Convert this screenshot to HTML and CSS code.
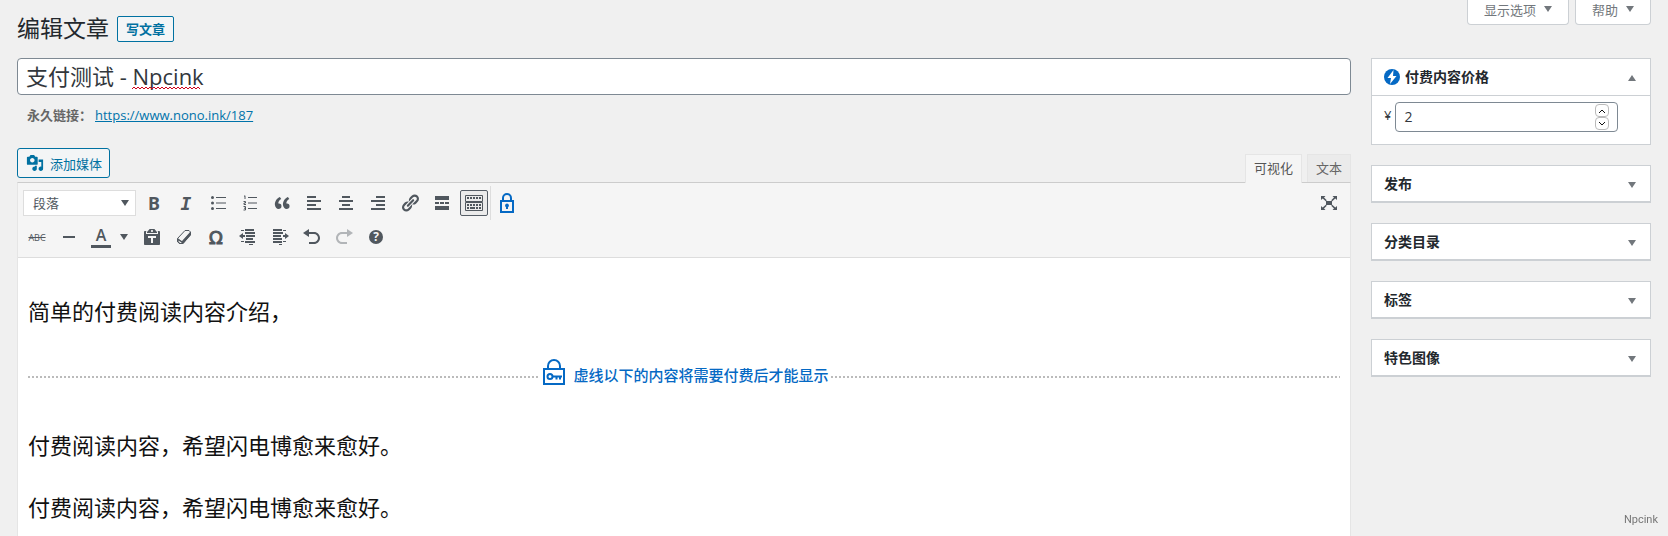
FILE: index.html
```html
<!DOCTYPE html>
<html lang="zh-CN">
<head>
    <meta charset="UTF-8">
    <meta name="viewport" content="width=device-width, initial-scale=1.0">
    <title>编辑文章</title>
    <link rel="stylesheet" href="styles.css">
</head>
<body>
    <header class="page-header">
        <h1>编辑文章</h1>
        <a href="#" class="title-action">写文章</a>
        <div class="screen-meta">
            <button type="button" class="meta-tab">显示选项<span class="arrow"></span></button>
            <button type="button" class="meta-tab">帮助<span class="arrow"></span></button>
        </div>
    </header>

    <div class="columns">
        <main class="main">
            <div class="title-wrap">
                <input type="text" class="title-input" id="title" aria-label="标题" value="支付测试 - Npcink">
                <svg class="squiggle" viewBox="0 0 68 4" aria-hidden="true"><path d="M0 3l2-2 2 2 2-2 2 2 2-2 2 2 2-2 2 2 2-2 2 2 2-2 2 2 2-2 2 2 2-2 2 2 2-2 2 2 2-2 2 2 2-2 2 2 2-2 2 2 2-2 2 2 2-2 2 2 2-2 2 2 2-2 2 2 2-2 2 2"/></svg>
            </div>
            <div class="permalink">
                <strong>永久链接：</strong>
                <a href="#">https://www.nono.ink/187</a>
            </div>

            <div class="editor-tools">
                <button type="button" class="media-btn">
                    <svg viewBox="0 0 20 20"><path d="M13 11V4c0-.55-.45-1-1-1h-1.67L9 1H5L3.67 3H2c-.55 0-1 .45-1 1v7c0 .55.45 1 1 1h10c.55 0 1-.45 1-1zM7 4.5c1.38 0 2.5 1.12 2.5 2.5S8.38 9.5 7 9.5 4.5 8.38 4.5 7 5.62 4.5 7 4.5zM14 6h5v10.5c0 1.38-1.12 2.5-2.5 2.5S14 17.88 14 16.5s1.12-2.5 2.5-2.5c.17 0 .34.02.5.05V9h-3V6zm-4 8.05V13h2v3.5c0 1.38-1.12 2.5-2.5 2.5S7 17.88 7 16.5 8.12 14 9.5 14c.17 0 .34.02.5.05z"/></svg>
                    添加媒体
                </button>
                <div class="editor-tabs">
                    <button type="button" class="editor-tab active">可视化</button>
                    <button type="button" class="editor-tab">文本</button>
                </div>
            </div>

            <div class="editor">
                <div class="toolbar">
                    <div class="toolbar-row">
                        <div class="select-wrap">
                            <select class="format-select" aria-label="格式">
                                <option>段落</option>
                            </select>
                            <span class="arrow"></span>
                        </div>
                        <button type="button" class="tool tool-bold" title="粗体">B</button>
                        <button type="button" class="tool tool-italic" title="斜体">I</button>
                        <button type="button" class="tool" title="项目符号列表">
                            <svg viewBox="0 0 20 20"><circle cx="4.5" cy="4.5" r="1.5"/><circle cx="4.5" cy="10" r="1.5"/><circle cx="4.5" cy="15.5" r="1.5"/><path d="M8 4h10v1H8zM8 9.500h10v1H8zM8 15h10v1H8z"/></svg>
                        </button>
                        <button type="button" class="tool" title="编号列表">
                            <svg viewBox="0 0 20 20"><path d="M8 4h9v1H8zM8 9.500h9v1H8zM8 15h9v1H8z"/><path class="line" d="M4 3.500l1-.8v3.300M3.500 8.500h2v1.500h-1.500v1.500h2M3.500 13.500h2v3.500h-2M4 15.200h1.500"/></svg>
                        </button>
                        <button type="button" class="tool" title="段落引用">
                            <svg viewBox="0 0 20 20"><path d="M9.490 13.220c0-.74-.2-1.380-.61-1.900-.62-.78-1.830-.88-2.530-.72-.29-1.650 1.110-3.750 2.920-4.650L7.880 4c-2.730 1.300-5.420 4.280-4.960 8.050C3.210 14.430 4.590 16 6.540 16c.85 0 1.560-.25 2.120-.75s.83-1.180.83-2.030zm8.050 0c0-.74-.2-1.380-.61-1.900-.63-.78-1.830-.88-2.530-.72-.29-1.650 1.110-3.750 2.920-4.650L15.930 4c-2.730 1.300-5.410 4.280-4.950 8.050.29 2.380 1.660 3.950 3.610 3.950.85 0 1.560-.25 2.120-.75s.83-1.180.83-2.030z"/></svg>
                        </button>
                        <button type="button" class="tool" title="左对齐">
                            <svg viewBox="0 0 20 20"><path d="M3 3h9v2H3zM3 7h14v2H3zM3 11h9v2H3zM3 15h14v2H3z"/></svg>
                        </button>
                        <button type="button" class="tool" title="居中对齐">
                            <svg viewBox="0 0 20 20"><path d="M6 3h8v2H6zM3 7h14v2H3zM6 11h8v2H6zM3 15h14v2H3z"/></svg>
                        </button>
                        <button type="button" class="tool" title="右对齐">
                            <svg viewBox="0 0 20 20"><path d="M8 3h9v2H8zM3 7h14v2H3zM8 11h9v2H8zM3 15h14v2H3z"/></svg>
                        </button>
                        <button type="button" class="tool" title="插入链接">
                            <svg viewBox="0 0 20 20"><path d="M17.740 2.760c1.680 1.690 1.680 4.410 0 6.100l-1.530 1.520c-1.120 1.120-2.700 1.470-4.140 1.090l2.620-2.610.76-.77.76-.76c.84-.84.84-2.200 0-3.040-.84-.85-2.200-.85-3.040 0l-.77.76-3.380 3.380c-.37-1.440-.02-3.020 1.100-4.140l1.520-1.530c1.690-1.680 4.420-1.680 6.100 0zM8.590 13.430l5.340-5.340c.42-.42.42-1.100 0-1.520-.44-.43-1.130-.39-1.530 0l-5.330 5.340c-.42.42-.42 1.100 0 1.520.44.43 1.130.39 1.520 0zm-.76 2.290l4.140-4.150c.38 1.440.03 3.020-1.090 4.140l-1.520 1.530c-1.690 1.680-4.410 1.680-6.100 0-1.680-1.680-1.680-4.420 0-6.100l1.530-1.520c1.120-1.120 2.700-1.470 4.140-1.100l-4.140 4.150c-.85.84-.85 2.200 0 3.050.84.84 2.200.84 3.040 0z"/></svg>
                        </button>
                        <button type="button" class="tool" title="插入More标签">
                            <svg viewBox="0 0 20 20"><path d="M3 3h14v4H3zM3 9h4v2H3zM8 9h4v2H8zM13 9h4v2h-4zM3 13h14v4H3z"/></svg>
                        </button>
                        <button type="button" class="tool pressed" title="工具栏切换">
                            <svg viewBox="0 0 20 20"><path class="line" d="M1.500 2.500h17v6h-17zM1.500 9.500h17v8h-17z"/><path d="M3 4h2v2H3zM6 4h2v2H6zM9 4h2v2H9zM12 4h2v2h-2zM15 4h2v2h-2zM3 11h2v2H3zM6 11h2v2H6zM9 11h2v2H9zM12 11h2v2h-2zM15 11h2v2h-2zM3 14h2v2H3zM6 14h5v2H6zM12 14h2v2h-2zM15 14h2v2h-2z"/></svg>
                        </button>
                        <span class="separator"></span>
                        <button type="button" class="tool tool-lock" title="付费内容">
                            <svg viewBox="0 0 20 20"><path class="stroke" d="M4 8h12v11H4zM6 8V5a4 4 0 0 1 8 0v3"/><path d="M10 10.500a2 2 0 0 1 1 3.700V16H9v-1.800A2 2 0 0 1 10 10.500z"/></svg>
                        </button>
                        <button type="button" class="tool tool-full" title="全屏">
                            <svg viewBox="0 0 20 20"><path d="M7 8h6v4H7zM2 3h4.500L5 4.500 7.800 7.300 6.800 8.300 3.700 5.500 2 7zM18 3h-4.500L15 4.500l-2.800 2.800 1 1 3.100-2.800L18 7zM2 17h4.500L5 15.500l2.800-2.800-1-1-3.100 2.800L2 13zM18 17h-4.500l1.500-1.500-2.800-2.800 1-1 3.100 2.800L18 13z"/></svg>
                        </button>
                    </div>
                    <div class="toolbar-row">
                        <button type="button" class="tool tool-strike" title="删除线">ABC</button>
                        <button type="button" class="tool" title="水平线">
                            <svg viewBox="0 0 20 20"><path d="M4 9h12v2H4z"/></svg>
                        </button>
                        <button type="button" class="tool tool-color" title="文字颜色">A</button>
                        <button type="button" class="tool-open" title="选择颜色"><span class="arrow"></span></button>
                        <button type="button" class="tool" title="粘贴为文本">
                            <svg viewBox="0 0 20 20"><path d="M12.380 2L15 5v1H5V5l2.640-3h4.740zM10 5c.55 0 1-.44 1-1 0-.55-.45-1-1-1s-1 .45-1 1c0 .56.45 1 1 1zm5.450-1H17c.55 0 1 .45 1 1v12c0 .56-.45 1-1 1H3c-.55 0-1-.44-1-1V5c0-.55.45-1 1-1h1.550L4 4.630V7h12V4.630zM14 11V9H6v2h3v5h2v-5h3z"/></svg>
                        </button>
                        <button type="button" class="tool" title="清除格式">
                            <svg viewBox="0 0 20 20"><path class="line" d="M3.500 11.500L11 3.500h4l1.500 1.500v2.500L9 16.500H5.500L3.500 14.500z"/><path d="M3 11.500l1.500 0 3.500 2.500L16 5l1 .5V8L9 17H5.500L3 14.500z M4.500 13.500v1l1.500 1.500h1.500v-.5z" fill-rule="evenodd"/><path class="gap" d="M4.700 11.500L11.200 4.500h3.600l.5.8L8 13.200l-.8.300z"/></svg>
                        </button>
                        <button type="button" class="tool tool-omega" title="特殊字符">Ω</button>
                        <button type="button" class="tool" title="减少缩进">
                            <svg viewBox="0 0 20 20"><path d="M3 3h3v1H3zM7 2h9v2H7zM7 5h10v2H7zM8 8h9v2H8zM8 11h7v2H8zM7 14h10v2H7zM11 17h4v1h-4zM1 9l4-3v2h2v2H5v2zM3 14h3v1H3z"/></svg>
                        </button>
                        <button type="button" class="tool" title="增加缩进">
                            <svg viewBox="0 0 20 20"><path d="M3 2h9v2H3zM13 3h3v1h-3zM3 5h10v2H3zM3 8h8v2H3zM3 11h9v2H3zM3 14h9v2H3zM13 14h3v1h-3zM9 17h3v1H9zM19 9l-4-3v2h-2v2h2v2z"/></svg>
                        </button>
                        <button type="button" class="tool" title="撤销">
                            <svg viewBox="0 0 20 20"><path d="M12 5H7V2L1 6l6 4V7h5c2.200 0 4 1.800 4 4s-1.800 4-4 4H7v2h5c3.300 0 6-2.700 6-6s-2.700-6-6-6z"/></svg>
                        </button>
                        <button type="button" class="tool" title="重做" disabled>
                            <svg viewBox="0 0 20 20"><path d="M8 5h5V2l6 4-6 4V7H8c-2.200 0-4 1.800-4 4s1.800 4 4 4h5v2H8c-3.300 0-6-2.700-6-6s2.700-6 6-6z"/></svg>
                        </button>
                        <button type="button" class="tool" title="键盘快捷键"><span class="help-mark">?</span></button>
                    </div>
                </div>

                <div class="content">
                    <p>简单的付费阅读内容介绍，</p>
                    <div class="paywall">
                        <svg viewBox="0 0 24 28"><path d="M2 11h20v15H2zM6 11V8a6 6 0 0 1 12 0v3"/><circle cx="8" cy="18.500" r="2.500"/><path d="M10.500 18.500H20M18 18.500v3M14.500 18.500v3"/></svg>
                        <span>虚线以下的内容将需要付费后才能显示</span>
                    </div>
                    <p>付费阅读内容，希望闪电博愈来愈好。</p>
                    <p>付费阅读内容，希望闪电博愈来愈好。</p>
                </div>
            </div>
        </main>

        <aside class="sidebar">
            <section class="postbox open">
                <h2>
                    <svg class="bolt" viewBox="0 0 16 16"><circle cx="8" cy="8" r="8"/><path d="M9.500 1L3.500 9h3.500L6 15 12.500 7H9z"/></svg>
                    付费内容价格
                    <span class="arrow up"></span>
                </h2>
                <div class="price-row">
                    <label for="price">¥</label>
                    <div class="price-box">
                        <input type="number" id="price" value="2">
                        <div class="spinner">
                            <button type="button" aria-label="增加"><svg viewBox="0 0 8 6"><path d="M1 5l3-3 3 3"/></svg></button>
                            <button type="button" aria-label="减少"><svg viewBox="0 0 8 6"><path d="M1 1l3 3 3-3"/></svg></button>
                        </div>
                    </div>
                </div>
            </section>
            <section class="postbox"><h2>发布<span class="arrow"></span></h2></section>
            <section class="postbox"><h2>分类目录<span class="arrow"></span></h2></section>
            <section class="postbox"><h2>标签<span class="arrow"></span></h2></section>
            <section class="postbox"><h2>特色图像<span class="arrow"></span></h2></section>
        </aside>
    </div>

    <div class="watermark">Npcink</div>
</body>
</html>
```
FILE: styles.css
```css
* {
    box-sizing: border-box;
}
body {
    display: flex;
    flex-direction: column;
    min-height: 100vh;
    margin: 0;
    padding: 0 17px;
    background-color: #f0f0f0;
    color: #32373c;
    font-family: "Open Sans", "Noto Sans CJK SC", sans-serif;
    font-size: 13px;
    line-height: 20px;
}
button,
input,
select {
    margin: 0;
    font-family: inherit;
    font-size: 13px;
    color: inherit;
}
button {
    padding: 0;
    cursor: pointer;
}
a {
    color: #0073aa;
}
svg {
    display: block;
    flex: none;
    fill: currentColor;
}
.arrow {
    flex: none;
    border: 4px solid transparent;
    border-top: 6px solid currentColor;
    border-bottom: 0;
}
.arrow.up {
    border-top: 0;
    border-bottom: 6px solid currentColor;
}

/* header */
.page-header {
    display: flex;
    align-items: flex-start;
    padding-bottom: 16px;
}
.page-header h1 {
    margin: 15px 8px 0 0;
    font-size: 23px;
    font-weight: 400;
    line-height: 26px;
    color: #23282d;
}
.title-action {
    margin-top: 16px;
    padding: 0 8px;
    border: 1px solid #0071a1;
    border-radius: 2px;
    background-color: #f3f5f6;
    color: #0071a1;
    font-weight: 600;
    line-height: 24px;
    text-decoration: none;
}
.screen-meta {
    display: flex;
    gap: 6px;
    margin-left: auto;
}
.meta-tab {
    display: flex;
    align-items: center;
    gap: 8px;
    height: 25px;
    padding: 0 16px 6px;
    border: 1px solid #ccd0d4;
    border-top: 0;
    border-radius: 0 0 4px 4px;
    background-color: #fff;
    color: #72777c;
}

/* columns */
.columns {
    display: flex;
    flex: 1;
    gap: 20px;
}
.main {
    display: flex;
    flex: 1;
    flex-direction: column;
    min-width: 0;
}
.sidebar {
    width: 280px;
}

/* title */
.title-wrap {
    position: relative;
}
.title-input {
    display: block;
    width: 100%;
    height: 37px;
    padding: 0 8px 4px;
    border: 1px solid #7e8993;
    border-radius: 4px;
    background-color: #fff;
    font-size: 22px;
}
.squiggle {
    position: absolute;
    left: 115px;
    top: 28px;
    width: 68px;
    height: 4px;
    fill: none;
    stroke: #d00018;
}
.permalink {
    display: flex;
    gap: 3px;
    padding: 10px;
    color: #666;
}
.permalink strong {
    font-weight: 600;
}

/* editor */
.editor-tools {
    display: flex;
    align-items: flex-end;
    justify-content: space-between;
    margin-top: 13px;
}
.media-btn {
    display: flex;
    align-items: center;
    gap: 6px;
    height: 30px;
    margin-bottom: 4px;
    padding: 0 7px 0 8px;
    border: 1px solid #0071a1;
    border-radius: 3px;
    background-color: #f3f5f6;
    color: #0071a1;
}
.media-btn svg {
    width: 18px;
    height: 18px;
}
.editor-tabs {
    display: flex;
    gap: 5px;
}
.editor-tab {
    height: 28px;
    padding: 0 8px 3px;
    border: 1px solid #e5e5e5;
    border-bottom: 0;
    background-color: #ebebeb;
    color: #666;
}
.editor-tab.active {
    z-index: 1;
    height: 29px;
    margin-bottom: -1px;
    background-color: #f5f5f5;
    color: #555;
}
.editor {
    flex: 1;
    border: 1px solid #e5e5e5;
    border-top-color: #ccc;
    border-bottom: 0;
    background-color: #fff;
}
.toolbar {
    display: flex;
    flex-direction: column;
    gap: 8px;
    padding: 7px 5px;
    border-bottom: 1px solid #ddd;
    background-color: #f5f5f5;
    color: #50575e;
}
.toolbar-row {
    display: flex;
    gap: 4px;
}
.select-wrap {
    position: relative;
    width: 113px;
}
.select-wrap .arrow {
    position: absolute;
    top: 10px;
    right: 7px;
    pointer-events: none;
}
.format-select {
    width: 100%;
    height: 26px;
    padding: 0 9px;
    border: 1px solid #ddd;
    border-radius: 0;
    background-color: #fff;
    appearance: none;
}
.tool,
.tool-open {
    display: flex;
    align-items: center;
    justify-content: center;
    width: 28px;
    height: 26px;
    border: 0;
    background: none;
}
.tool svg {
    width: 20px;
    height: 20px;
}
.tool:disabled {
    opacity: 0.4;
}
.tool .line,
.tool .stroke {
    fill: none;
    stroke: currentColor;
}
.tool .stroke {
    stroke-width: 2;
}
.tool .gap {
    fill: #f5f5f5;
}
.tool.pressed {
    border: 1px solid #555d66;
    border-radius: 2px;
    background-color: #ebebeb;
}
.tool-bold {
    font-family: "Noto Sans", sans-serif;
    font-size: 18px;
    font-weight: 700;
}
.tool-italic {
    font-family: "DejaVu Sans Mono", monospace;
    font-size: 18px;
    font-style: italic;
    font-weight: 700;
}
.tool-strike {
    font-size: 9px;
    text-decoration: line-through;
}
.tool-color {
    width: 20px;
    height: 24px;
    margin: 0 4px;
    border-bottom: 3px solid #50575e;
    font-size: 16px;
    font-weight: 600;
}
.tool-open {
    width: 19px;
    margin-left: -4px;
    padding-right: 2px;
}
.tool-omega {
    font-family: "DejaVu Sans", sans-serif;
    font-size: 18px;
    -webkit-text-stroke: 1px currentColor;
}
.tool-lock {
    color: #0569c4;
}
.tool-full {
    margin-left: auto;
    margin-right: 2px;
}
.separator {
    width: 1px;
    height: 34px;
    margin: -4px -2px -4px -2px;
    background-color: #ddd;
}
.help-mark {
    width: 14px;
    height: 14px;
    border-radius: 50%;
    background-color: #50575e;
    color: #f5f5f5;
    font-size: 12px;
    font-weight: 700;
    line-height: 14px;
}

/* content */
.content {
    padding: 36px 10px 0;
    color: #111;
}
.content p {
    margin: 0 0 28px;
    font-size: 22px;
    line-height: 34px;
}
.content p:last-child {
    margin-bottom: 0;
}
.paywall {
    display: flex;
    align-items: center;
    height: 42px;
    margin-bottom: 30px;
    color: #0569c4;
    font-size: 15px;
    font-weight: 500;
}
.paywall::before,
.paywall::after {
    content: "";
    flex: 1;
    height: 2px;
    background: repeating-linear-gradient(to right, #bbb 0 2px, transparent 2px 4px);
}
.paywall svg {
    width: 24px;
    height: 28px;
    margin: 0 8px 10px 4px;
    fill: none;
    stroke: currentColor;
    stroke-width: 2;
}
.paywall span {
    padding: 0 2px 5px 0;
}

/* sidebar */
.postbox {
    margin-bottom: 20px;
    border: 1px solid #ccd0d4;
    background-color: #fff;
}
.postbox h2 {
    display: flex;
    align-items: center;
    gap: 5px;
    height: 36px;
    margin: 0;
    padding: 0 14px 0 12px;
    border-bottom: 1px solid #ccd0d4;
    color: #23282d;
    font-size: 14px;
    font-weight: 600;
}
.postbox.open h2 {
    height: 37px;
}
.postbox .arrow {
    margin: 2px 0 0 auto;
    color: #72777c;
}
.bolt {
    width: 16px;
    height: 16px;
    fill: #0569c4;
}
.bolt path {
    fill: #fff;
}
.price-row {
    display: flex;
    gap: 4px;
    padding: 6px 32px 12px 12px;
}
.price-row label {
    line-height: 26px;
}
.price-box {
    display: flex;
    flex: 1;
    align-items: center;
    height: 30px;
    padding: 0 8px;
    border: 1px solid #7e8993;
    border-radius: 4px;
}
.price-box input {
    flex: 1;
    min-width: 0;
    padding: 0 0 2px;
    border: 0;
    outline: 0;
    font-size: 14px;
    appearance: textfield;
}
.spinner {
    display: flex;
    flex-direction: column;
}
.spinner button {
    display: flex;
    align-items: center;
    justify-content: center;
    width: 14px;
    height: 13px;
    border: 1px solid #bbb;
    border-radius: 4px;
    background-color: #fff;
}
.spinner svg {
    width: 8px;
    height: 6px;
    fill: none;
    stroke: #111;
    stroke-width: 1;
}

.watermark {
    position: fixed;
    right: 10px;
    bottom: 6px;
    color: #777;
    font-family: Roboto, sans-serif;
    font-size: 11px;
}
```
